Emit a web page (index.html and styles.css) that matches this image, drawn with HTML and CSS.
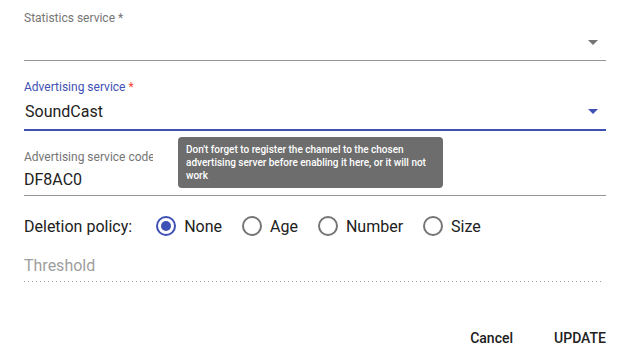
FILE: index.html
```html
<!DOCTYPE html>
<html lang="en">
<head>
    <meta charset="UTF-8">
    <meta name="viewport" content="width=device-width, initial-scale=1.0">
    <title>Channel settings</title>
    <link rel="stylesheet" href="styles.css">
</head>
<body>

<div class="dialog">
    <div class="field first">
        <div class="field-label">Statistics service *</div>
        <div class="select">
            <span class="select-value"></span>
            <svg class="arrow" width="10" height="5" viewBox="0 0 10 5"><path d="M0 0h10L5 5z" fill="#757575"/></svg>
        </div>
    </div>

    <div class="field focused">
        <div class="field-label">Advertising service <span class="required">*</span></div>
        <div class="select">
            <span class="select-value">SoundCast</span>
            <svg class="arrow" width="10" height="5" viewBox="0 0 10 5"><path d="M0 0h10L5 5z" fill="#3f51b5"/></svg>
        </div>
    </div>

    <div class="field">
        <div class="field-label clipped">Advertising service code</div>
        <div class="text-input">DF8AC0</div>
        <div class="tooltip">Don't forget to register the channel to the chosen advertising server before enabling it here, or it will not work</div>
    </div>

    <div class="radio-row">
        <span class="radio-title">Deletion policy:</span>
        <label class="radio checked">
            <svg width="24" height="24" viewBox="0 0 24 24"><circle cx="12" cy="12" r="9" fill="none" stroke="#3f51b5" stroke-width="2"/><circle cx="12" cy="12" r="5" fill="#3f51b5"/></svg>
            None
        </label>
        <label class="radio">
            <svg width="24" height="24" viewBox="0 0 24 24"><circle cx="12" cy="12" r="9" fill="none" stroke="#757575" stroke-width="2"/></svg>
            Age
        </label>
        <label class="radio">
            <svg width="24" height="24" viewBox="0 0 24 24"><circle cx="12" cy="12" r="9" fill="none" stroke="#757575" stroke-width="2"/></svg>
            Number
        </label>
        <label class="radio">
            <svg width="24" height="24" viewBox="0 0 24 24"><circle cx="12" cy="12" r="9" fill="none" stroke="#757575" stroke-width="2"/></svg>
            Size
        </label>
    </div>

    <div class="threshold">
        <div class="threshold-label">Threshold</div>
        <div class="dotted"></div>
    </div>

    <div class="actions">
        <button class="btn cancel">Cancel</button>
        <button class="btn">UPDATE</button>
    </div>
</div>

</body>
</html>
```

FILE: styles.css
```css
body {
    margin: 0;
    font-family: Roboto, "Liberation Sans", sans-serif;
    background: #fff;
    color: #212121;
}

.dialog {
    width: 582px;
    padding: 11px 23px 0 24px;
}

.field {
    position: relative;
    margin-top: 19px;
}

.field.first {
    margin-top: 0;
}

.field-label {
    font-size: 12px;
    line-height: 14px;
    color: #757575;
}

.field-label.clipped {
    width: 129px;
    white-space: nowrap;
    overflow: hidden;
}

.focused .field-label {
    color: #3f51b5;
}

.required {
    color: #f44336;
}

.select {
    display: flex;
    align-items: center;
    justify-content: space-between;
    height: 35px;
    padding-right: 8px;
    border-bottom: 1px solid #949494;
}

.focused .select {
    border-bottom: 2px solid #3f51b5;
}

.select-value {
    font-size: 16px;
    padding-left: 1px;
}

.text-input {
    height: 31px;
    line-height: 31px;
    font-size: 16px;
    border-bottom: 1px solid #949494;
}

.tooltip {
    position: absolute;
    left: 154px;
    top: -13px;
    width: 249px;
    padding: 6px 8px;
    background: #6d6d6d;
    color: #fff;
    font-size: 10px;
    font-weight: 500;
    line-height: 13px;
    border-radius: 4px;
}

.radio-row {
    display: flex;
    align-items: center;
    margin-top: 18px;
    height: 24px;
    font-size: 16px;
}

.radio-title {
    margin-right: 22px;
}

.radio {
    display: flex;
    align-items: center;
    gap: 6px;
    margin-right: 18px;
}

.threshold {
    margin-top: 18px;
}

.threshold-label {
    font-size: 16px;
    line-height: 19px;
    color: #9e9e9e;
}

.dotted {
    margin-top: 6px;
    height: 1px;
    width: 580px;
    background-image: linear-gradient(to right, #9e9e9e 1px, transparent 1px);
    background-size: 4px 1px;
}

.actions {
    display: flex;
    justify-content: flex-end;
    gap: 25px;
    margin-top: 42px;
    margin-right: -8px;
}

.btn {
    border: none;
    background: none;
    padding: 6px 8px;
    font-family: Roboto, "Liberation Sans", sans-serif;
    font-size: 14px;
    font-weight: 500;
    line-height: 16px;
    color: #212121;
}
```
